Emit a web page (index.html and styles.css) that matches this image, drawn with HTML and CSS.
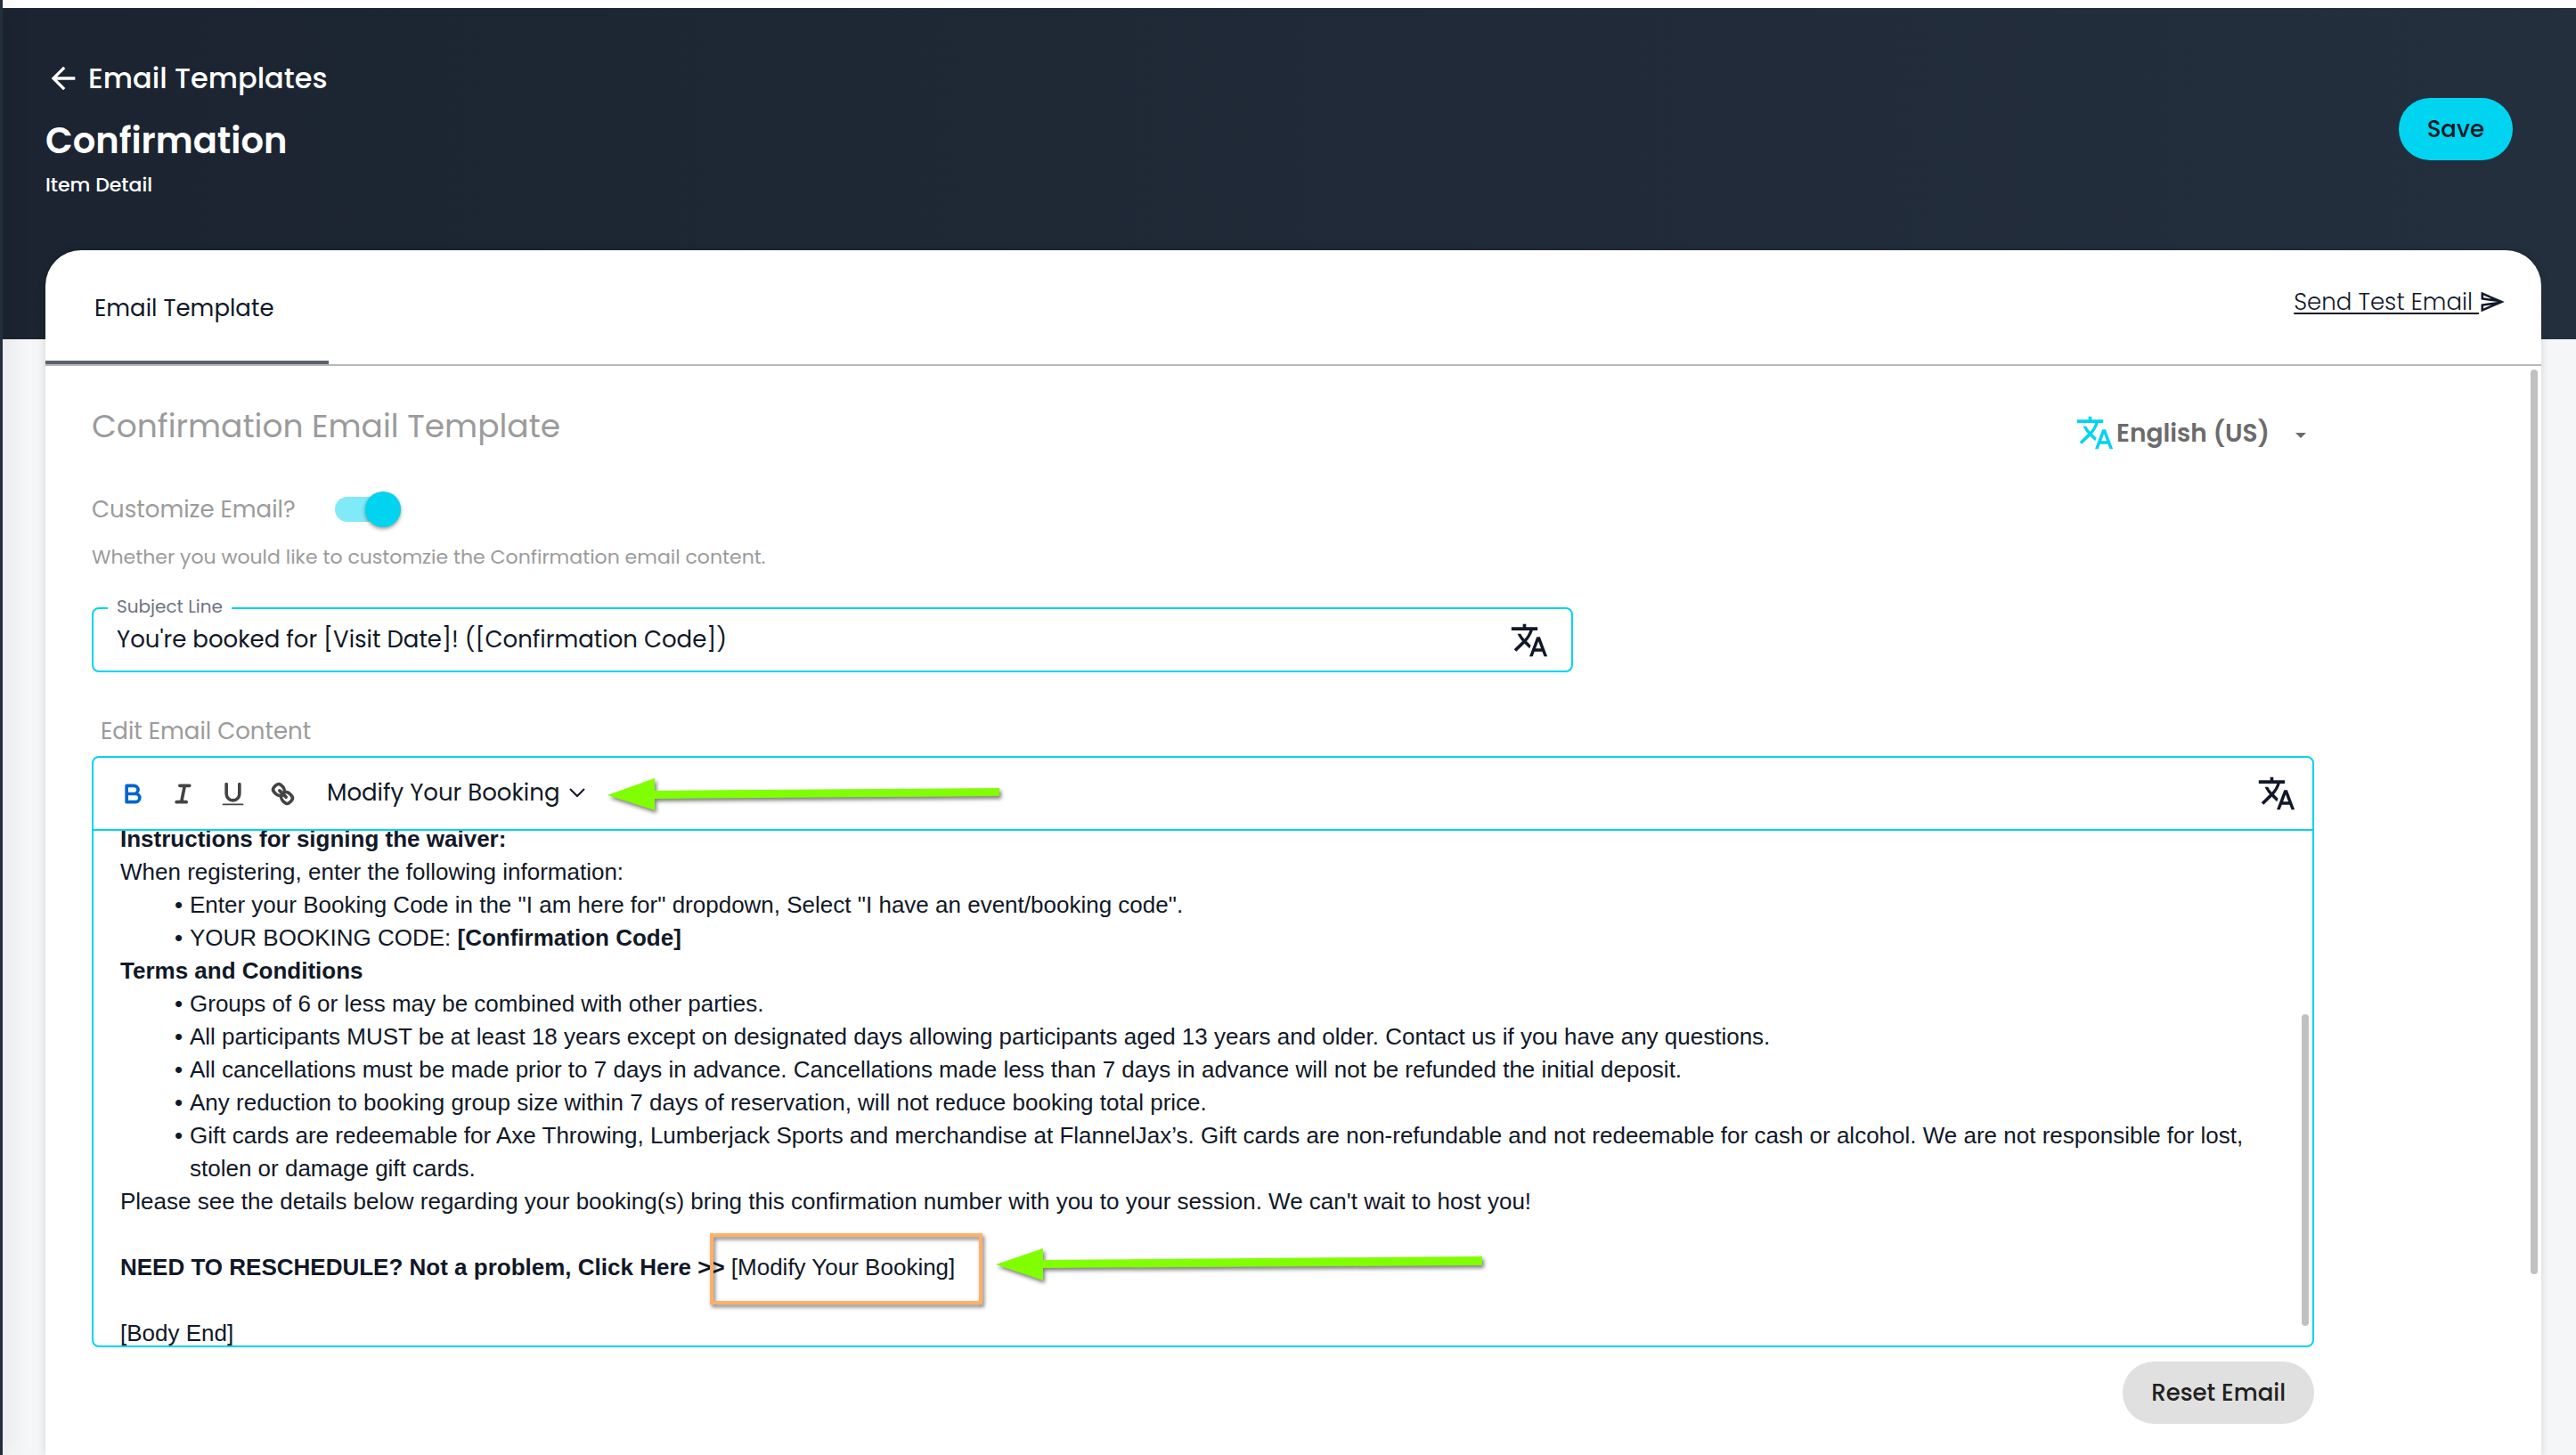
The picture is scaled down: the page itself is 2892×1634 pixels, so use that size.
FILE: index.html
```html
<!DOCTYPE html>
<html lang="en">
<head>
    <meta charset="UTF-8">
    <meta name="viewport" content="width=device-width, initial-scale=1.0">
    <title>Email Templates - Confirmation</title>
    <link rel="stylesheet" href="styles.css">
</head>
<body>
    <svg class="sprite" aria-hidden="true">
        <symbol id="translate" viewBox="0 0 24 24">
            <path d="M12.87 15.07l-2.54-2.51.03-.03c1.74-1.94 2.98-4.17 3.71-6.53H17V4h-7V2H8v2H1v1.99h11.17C11.5 7.92 10.44 9.75 9 11.35 8.07 10.32 7.3 9.19 6.69 8h-2c.73 1.63 1.73 3.17 2.98 4.56l-5.09 5.02L4 19l5-5 3.11 3.11.76-2.04zM18.5 10h-2L12 22h2l1.12-3h4.75L21 22h2l-4.5-12zm-2.62 7l1.62-4.33L19.12 17h-3.24z"/>
        </symbol>
    </svg>

    <aside class="sidebar"></aside>
    <main class="main">
        <header class="header">
            <div>
                <a class="back" href="#">
                    <svg class="back-icon" viewBox="0 0 24 24"><path d="M20 11H7.83l5.59-5.59L12 4l-8 8 8 8 1.41-1.41L7.83 13H20v-2z"/></svg>
                    Email Templates
                </a>
                <h1>Confirmation</h1>
                <p class="subtitle">Item Detail</p>
            </div>
            <button class="pill save">Save</button>
        </header>

        <section class="card">
            <nav class="tabs">
                <a class="tab active" href="#">Email Template</a>
                <a class="send-test" href="#"><span>Send Test Email&nbsp;</span><svg viewBox="0 0 24 24"><path d="M4.01 6.03l7.51 3.22-7.52-1 .01-2.22m7.5 8.72L4 17.97v-2.22l7.51-1M2.01 3L2 10l15 2-15 2 .01 7L23 12 2.01 3z"/></svg></a>
            </nav>

            <div class="content">
                <div class="title-row">
                    <h2>Confirmation Email Template</h2>
                    <div class="language">
                        <svg class="translate"><use href="#translate"/></svg>
                        <select aria-label="Language">
                            <option>English (US)</option>
                        </select>
                        <svg class="caret" viewBox="0 0 12 6"><path d="M0 0h12L6 6z"/></svg>
                    </div>
                </div>

                <div class="toggle-row">
                    <label for="customize">Customize Email?</label>
                    <input class="toggle" id="customize" type="checkbox" checked>
                </div>
                <p class="hint">Whether you would like to customzie the Confirmation email content.</p>

                <div class="field">
                    <label for="subject">Subject Line</label>
                    <input id="subject" type="text" value="You're booked for [Visit Date]! ([Confirmation Code])">
                    <button class="icon-button" aria-label="Translate subject"><svg class="translate"><use href="#translate"/></svg></button>
                </div>

                <p class="editor-label" id="editor-label">Edit Email Content</p>
                <div class="editor">
                    <div class="toolbar">
                        <button class="icon-button tool on" aria-label="Bold">
                            <svg viewBox="0 0 18 18"><path d="M5 4h4.500a2.500 2.500 0 0 1 0 5H5zM5 9h5.500a2.500 2.500 0 0 1 0 5H5z"/></svg>
                        </button>
                        <button class="icon-button tool" aria-label="Italic">
                            <svg viewBox="0 0 18 18"><path d="M7 4h6M5 14h6M8 14l2-10"/></svg>
                        </button>
                        <button class="icon-button tool" aria-label="Underline">
                            <svg viewBox="0 0 18 18"><path d="M5 3v6a4 4 0 0 0 8 0V3"/><path class="thin" d="M3 15.500h12"/></svg>
                        </button>
                        <button class="icon-button tool" aria-label="Link">
                            <svg viewBox="0 0 18 18"><path d="M7 7l4 4M8.900 4.577a3.476 3.476 0 0 1 .36 4.679A3.476 3.476 0 0 1 4.577 8.900C3.185 7.500 2.035 6.400 4.217 4.217S7.500 3.185 8.900 4.577zM13.423 9.100a3.476 3.476 0 0 0-4.679-.36 3.476 3.476 0 0 0 .36 4.679c1.392 1.392 2.500 2.542 4.679.36s1.032-3.279-.36-4.679z"/></svg>
                        </button>
                        <div class="merge-field">
                            <select aria-label="Insert field">
                                <option>Modify Your Booking</option>
                            </select>
                            <svg class="chevron" viewBox="0 0 20 12"><path d="M2 2l8 8 8-8"/></svg>
                        </div>
                        <button class="icon-button push-right" aria-label="Translate content"><svg class="translate"><use href="#translate"/></svg></button>
                    </div>

                    <div class="editor-body" contenteditable="true" role="textbox" aria-multiline="true" aria-labelledby="editor-label" spellcheck="false">
                        <p><b>Instructions for signing the waiver:</b></p>
                        <p>When registering, enter the following information:</p>
                        <ul>
                            <li>Enter your Booking Code in the "I am here for" dropdown, Select "I have an event/booking code".</li>
                            <li>YOUR BOOKING CODE: <b>[Confirmation Code]</b></li>
                        </ul>
                        <p><b>Terms and Conditions</b></p>
                        <ul>
                            <li>Groups of 6 or less may be combined with other parties.</li>
                            <li>All participants MUST be at least 18 years except on designated days allowing participants aged 13 years and older. Contact us if you have any questions.</li>
                            <li>All cancellations must be made prior to 7 days in advance. Cancellations made less than 7 days in advance will not be refunded the initial deposit.</li>
                            <li>Any reduction to booking group size within 7 days of reservation, will not reduce booking total price.</li>
                            <li>Gift cards are redeemable for Axe Throwing, Lumberjack Sports and merchandise at FlannelJax’s. Gift cards are non-refundable and not redeemable for cash or alcohol. We are not responsible for lost, stolen or damage gift cards.</li>
                        </ul>
                        <p>Please see the details below regarding your booking(s) bring this confirmation number with you to your session. We can't wait to host you!</p>
                        <p><br></p>
                        <p><b>NEED TO RESCHEDULE? Not a problem, Click Here &gt;&gt;</b> [Modify Your Booking]</p>
                        <p><br></p>
                        <p>[Body End]</p>
                    </div>
                    <span class="thumb editor-thumb"></span>

                    <!-- callouts -->
                    <svg class="callout arrow-toolbar" viewBox="0 0 450 50"><path d="M2 22L55 3V17L442 14V23L55 26V39z"/></svg>
                    <span class="callout highlight"></span>
                    <svg class="callout arrow-link" viewBox="0 0 560 50"><path d="M2 21L55 3V16L548 12V22L55 25V39z"/></svg>
                </div>

                <div class="actions">
                    <button class="pill reset">Reset Email</button>
                </div>
            </div>
            <span class="thumb page-thumb"></span>
        </section>
    </main>
</body>
</html>
```
FILE: styles.css
```css
* {
    box-sizing: border-box;
}
body {
    margin: 0;
    height: 100vh;
    overflow: hidden;
    display: flex;
    font-family: Poppins, Inter, sans-serif;
    font-size: 26px;
    color: #111827;
    background: #f5f6f8;
}
h1, h2, p, ul {
    margin: 0;
}
a {
    color: inherit;
    text-decoration: none;
}
button, input, select {
    font: inherit;
    color: inherit;
    border: none;
    background: none;
    padding: 0;
    margin: 0;
    outline: none;
}
button, select {
    cursor: pointer;
}
select {
    appearance: none;
}
svg {
    display: block;
    fill: currentColor;
}
.sprite {
    display: none;
}
.sidebar {
    width: 3px;
    background: #232e3d;
    box-shadow: 0 0 24px rgba(0, 0, 0, 0.4);
    z-index: 1;
}
.main {
    flex: 1;
    display: flex;
    flex-direction: column;
    border-top: 9px solid #fff;
}

/* header */
.header {
    display: flex;
    justify-content: space-between;
    align-items: flex-start;
    height: 372px;
    flex-shrink: 0;
    padding: 59px 71px 0 48px;
    color: #fff;
    background: linear-gradient(90deg, #1b2430, #242f3e);
}
.back {
    display: flex;
    align-items: center;
    gap: 8px;
    font-size: 32px;
    font-weight: 500;
    line-height: 40px;
}
.back-icon {
    width: 40px;
    height: 40px;
}
h1 {
    margin-top: 25px;
    font-size: 40px;
    font-weight: 600;
    line-height: 50px;
}
.subtitle {
    margin-top: 9px;
    font-size: 22px;
    font-weight: 500;
    line-height: 32px;
}
.pill {
    height: 70px;
    padding: 0 32px;
    border-radius: 35px;
    font-weight: 500;
}
.save {
    margin-top: 42px;
    color: #0b1a24;
    background: #00d4f0;
}

/* card */
.card {
    position: relative;
    flex: 1;
    margin: -100px 39px 0 48px;
    border-radius: 40px 40px 0 0;
    background: #fff;
    box-shadow: 0 0 10px rgba(0, 0, 0, 0.15);
}
.tabs {
    display: flex;
    justify-content: space-between;
    height: 130px;
    border-bottom: 2px solid #b8b8b8;
}
.tab {
    padding: 0 61px 0 55px;
    font-weight: 400;
    line-height: 130px;
}
.tab.active {
    border-bottom: 4px solid #5b616e;
}
.send-test {
    display: flex;
    align-items: center;
    height: 32px;
    margin: 42px 40px 0 0;
    font-weight: 300;
}
.send-test span {
    text-decoration: underline;
    text-decoration-thickness: 2px;
    text-underline-offset: 3px;
}
.send-test svg {
    width: 30px;
    height: 30px;
}
.content {
    padding: 42px 9.1% 0 52px;
}
.title-row {
    display: flex;
    justify-content: space-between;
}
h2 {
    font-size: 36px;
    font-weight: 400;
    line-height: 52px;
    color: #9b9b9b;
}
.language {
    display: flex;
    align-items: center;
    margin-top: 11px;
    padding-right: 9px;
    font-size: 28px;
    font-weight: 600;
    color: #6b6b6b;
}
.translate {
    width: 44px;
    height: 44px;
}
.language .translate {
    margin-right: 2px;
    color: #00d4f0;
}
.caret {
    width: 12px;
    height: 6px;
    margin: 6px 0 0 28px;
}
.toggle-row {
    display: flex;
    align-items: center;
    gap: 44px;
    height: 40px;
    margin-top: 44px;
    color: #9b9b9b;
}
.toggle {
    appearance: none;
    position: relative;
    width: 74px;
    height: 28px;
    border-radius: 14px;
    background: #80eaf8;
}
.toggle::before {
    content: "";
    position: absolute;
    top: -6px;
    right: 0;
    width: 40px;
    height: 40px;
    border-radius: 50%;
    background: #00d4f0;
    box-shadow: 0 2px 4px rgba(0, 0, 0, 0.4);
}
.hint {
    margin-top: 18px;
    font-size: 22px;
    line-height: 32px;
    color: #9b9b9b;
}
.field {
    position: relative;
    display: flex;
    align-items: center;
    width: 66.66%;
    height: 73px;
    margin-top: 40px;
    padding: 0 25px 0 26px;
    border: 2px solid #00d4f0;
    border-radius: 8px;
}
.field label {
    position: absolute;
    top: -17px;
    left: 16px;
    padding: 0 10px;
    font-size: 20px;
    line-height: 28px;
    color: #6b7280;
    background: #fff;
}
.field input {
    flex: 1;
}
.editor-label {
    margin-top: 50px;
    padding-left: 10px;
    line-height: 32px;
    color: #9b9b9b;
}

/* editor */
.editor {
    position: relative;
    margin-top: 12px;
    border: 2px solid #00d4f0;
    border-radius: 8px;
}
.toolbar {
    display: flex;
    align-items: center;
    height: 82px;
    padding: 0 18px 0 28px;
    border-bottom: 2px solid #00d4f0;
}
.tool {
    margin-right: 23px;
    color: #444;
}
.tool.on {
    color: #0066cc;
}
.tool svg {
    width: 33px;
    height: 33px;
    fill: none;
    stroke: currentColor;
    stroke-width: 2;
    stroke-linecap: round;
    stroke-linejoin: round;
}
.tool .thin {
    stroke-width: 1;
}
.merge-field {
    display: flex;
    align-items: center;
    gap: 9px;
    margin-left: 10px;
    padding-bottom: 3px;
}
.chevron {
    width: 20px;
    height: 12px;
    fill: none;
    stroke: currentColor;
    stroke-width: 2;
}
.push-right {
    margin-left: auto;
}
.editor-body {
    height: 578px;
    overflow: hidden;
    padding: 0 60px 0 30px;
    font-family: Arial, "Liberation Sans", sans-serif;
    line-height: 37px;
    outline: none;
}
.editor-body p:first-child {
    margin-top: -9px;
}
.editor-body ul {
    padding: 0;
    list-style: none;
}
.editor-body li {
    position: relative;
    padding-left: 78px;
}
.editor-body li::before {
    content: "•";
    position: absolute;
    left: 61px;
}
.thumb {
    position: absolute;
    width: 8px;
    border-radius: 4px;
    background: #c1c1c1;
}
.editor-thumb {
    top: 288px;
    right: 4px;
    height: 350px;
}
.page-thumb {
    top: 134px;
    right: 4px;
    height: 1016px;
}
.callout {
    position: absolute;
    pointer-events: none;
}
.arrow-toolbar {
    top: 20px;
    left: 575px;
    width: 450px;
    height: 50px;
}
.arrow-link {
    top: 548px;
    left: 1011px;
    width: 560px;
    height: 50px;
}
.arrow-toolbar, .arrow-link {
    fill: #80ff00;
    filter: drop-shadow(2px 3px 2px rgba(0, 0, 0, 0.5));
}
.highlight {
    top: 534px;
    left: 692px;
    width: 306px;
    height: 80px;
    border: 4px solid #ffb066;
    filter: drop-shadow(2px 3px 2px rgba(0, 0, 0, 0.5));
}
.actions {
    display: flex;
    justify-content: flex-end;
    margin-top: 16px;
}
.reset {
    color: #212121;
    background: #e0e0e0;
}
```
